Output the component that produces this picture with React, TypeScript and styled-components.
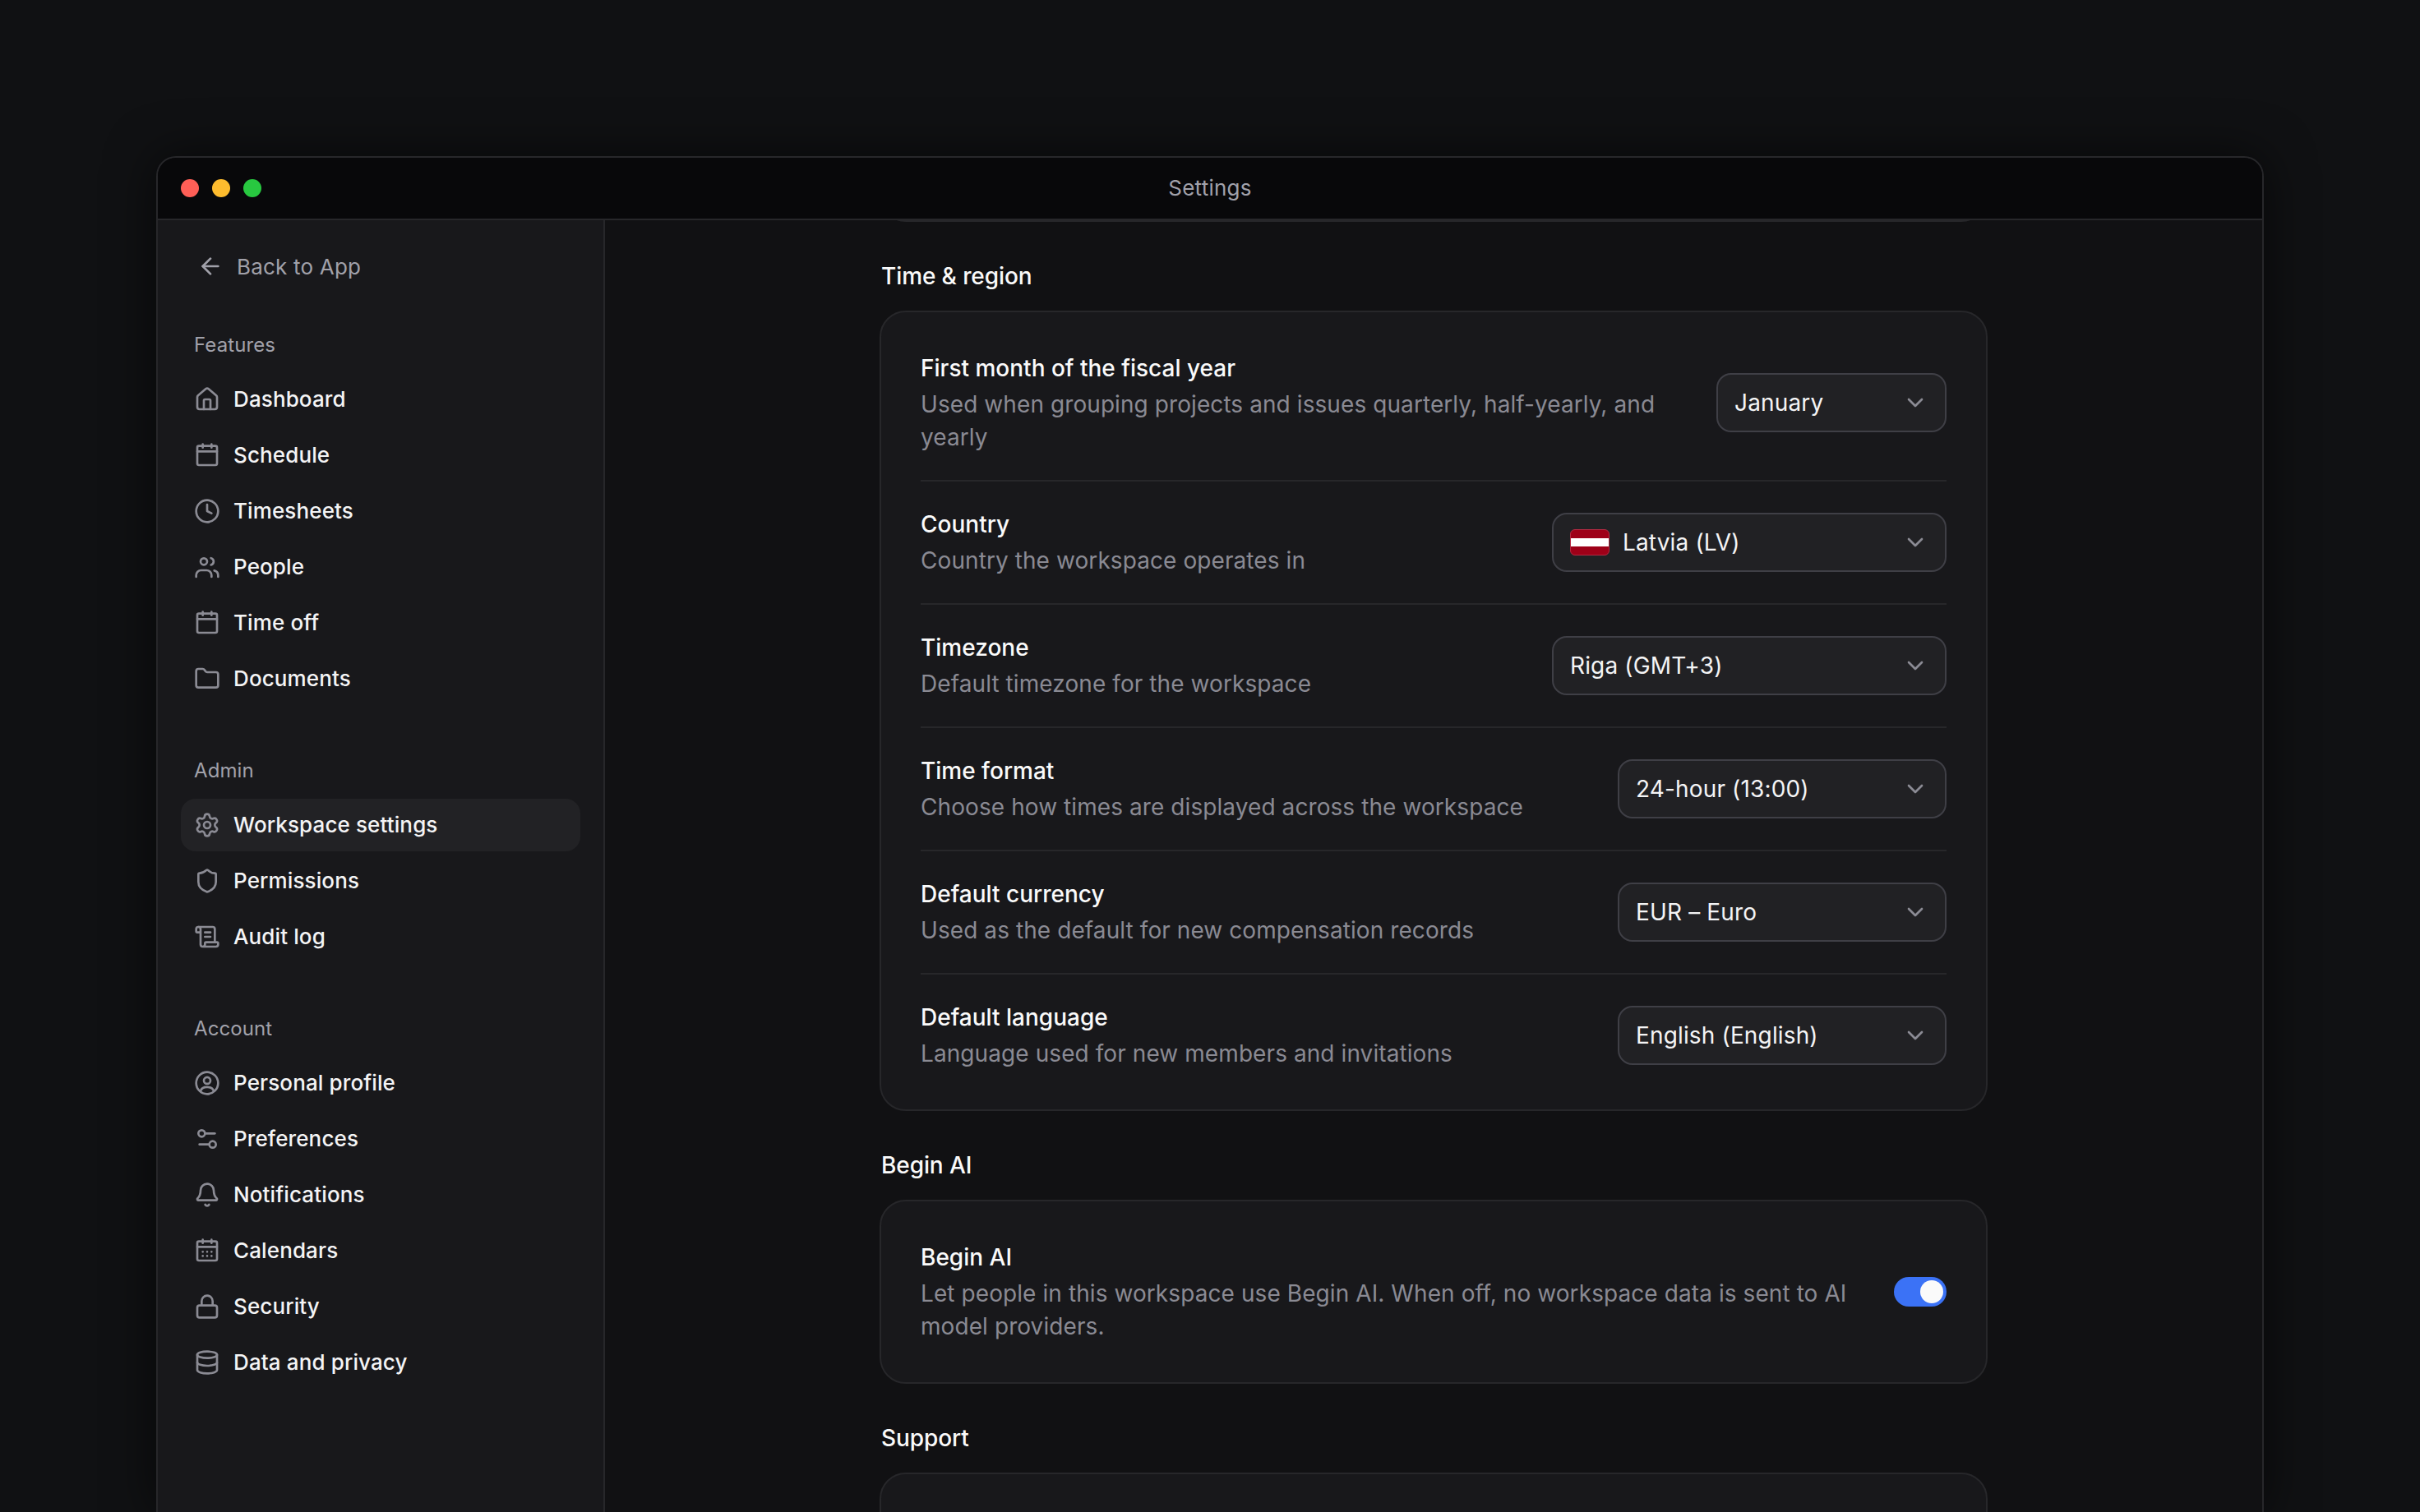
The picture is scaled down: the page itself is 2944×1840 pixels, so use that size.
import styled, { createGlobalStyle } from "styled-components";
import type { ReactNode } from "react";
import {
  ArrowLeft,
  Bell,
  ChevronDown,
  Clock,
  Database,
  Folder,
  House,
  Lock,
  ScrollText,
  Settings,
  Settings2,
  Shield,
} from "lucide-react";

const GlobalStyle = createGlobalStyle`
  html, body {
    margin: 0;
    height: 100%;
    background: #101113;
    font-family: "Inter", "Liberation Sans", sans-serif;
    -webkit-font-smoothing: antialiased;
    overflow: hidden;
  }
  * { box-sizing: border-box; }
`;

const ICON = { size: 32, strokeWidth: 2 };

const Line = ({ children }: { children: ReactNode }) => (
  <svg width="32" height="32" viewBox="0 0 24 24" fill="none" stroke="currentColor" strokeWidth="2" strokeLinecap="round" strokeLinejoin="round">
    {children}
  </svg>
);

const CalendarIcon = () => (
  <Line>
    <rect x="3" y="3.5" width="18" height="17.5" rx="1.5" />
    <path d="M3 8.5h18M8 2v3M16 2v3" />
  </Line>
);

const CalendarDotsIcon = () => (
  <Line>
    <rect x="3" y="3.5" width="18" height="17.5" rx="1.5" />
    <path d="M3 8.5h18M8 2v3M16 2v3" />
    <path d="M8 13h.01M12 13h.01M16 13h.01M8 16.8h.01M12 16.8h.01M16 16.8h.01" />
  </Line>
);

const PeopleIcon = () => (
  <Line>
    <circle cx="9" cy="7" r="3" />
    <path d="M15.5 3.9a3.200 3.200 0 0 1 0 6.200" />
    <path d="M2 21v-1.500A4.500 4.500 0 0 1 6.500 15h5a4.500 4.500 0 0 1 4.500 4.500V21" />
    <path d="M18.500 15.300a4.500 4.500 0 0 1 3.500 4.200V21" />
  </Line>
);

const ProfileIcon = () => (
  <Line>
    <circle cx="12" cy="12" r="10" />
    <circle cx="12" cy="9.700" r="3" />
    <path d="M6 19.300c.6-2.400 3-3.600 6-3.600s5.400 1.200 6 3.600" />
  </Line>
);

const features = [
  { label: "Dashboard", icon: <House {...ICON} /> },
  { label: "Schedule", icon: <CalendarIcon /> },
  { label: "Timesheets", icon: <Clock {...ICON} /> },
  { label: "People", icon: <PeopleIcon /> },
  { label: "Time off", icon: <CalendarIcon /> },
  { label: "Documents", icon: <Folder {...ICON} /> },
];

const admin = [
  { label: "Workspace settings", icon: <Settings {...ICON} />, active: true },
  { label: "Permissions", icon: <Shield {...ICON} /> },
  { label: "Audit log", icon: <ScrollText {...ICON} /> },
];

const account = [
  { label: "Personal profile", icon: <ProfileIcon /> },
  { label: "Preferences", icon: <Settings2 {...ICON} /> },
  { label: "Notifications", icon: <Bell {...ICON} /> },
  { label: "Calendars", icon: <CalendarDotsIcon /> },
  { label: "Security", icon: <Lock {...ICON} /> },
  { label: "Data and privacy", icon: <Database {...ICON} /> },
];

const groups = [
  { title: "Features", items: features },
  { title: "Admin", items: admin },
  { title: "Account", items: account },
];

const settings = [
  {
    title: "First month of the fiscal year",
    desc: "Used when grouping projects and issues quarterly, half-yearly, and yearly",
    value: "January",
    width: 280,
  },
  { title: "Country", desc: "Country the workspace operates in", value: "Latvia (LV)", width: 480, flag: true },
  { title: "Timezone", desc: "Default timezone for the workspace", value: "Riga (GMT+3)", width: 480 },
  { title: "Time format", desc: "Choose how times are displayed across the workspace", value: "24-hour (13:00)", width: 400 },
  { title: "Default currency", desc: "Used as the default for new compensation records", value: "EUR – Euro", width: 400 },
  { title: "Default language", desc: "Language used for new members and invitations", value: "English (English)", width: 400 },
];

const App = () => {
  return (
    <Page>
      <GlobalStyle />
      <Window>
        <TitleBar>
          <Lights>
            <Light color="#ff5f57" />
            <Light color="#febc2e" />
            <Light color="#28c840" />
          </Lights>
          <WindowTitle>Settings</WindowTitle>
        </TitleBar>
        <Body>
          <Sidebar>
            <BackLink>
              <ArrowLeft {...ICON} />
              Back to App
            </BackLink>
            {groups.map((group) => (
              <NavGroup key={group.title}>
                <GroupLabel>{group.title}</GroupLabel>
                <NavList>
                  {group.items.map((item) => (
                    <NavItem key={item.label} $active={"active" in item}>
                      <NavIcon>{item.icon}</NavIcon>
                      <NavLabel>{item.label}</NavLabel>
                    </NavItem>
                  ))}
                </NavList>
              </NavGroup>
            ))}
          </Sidebar>
          <Main>
            <ScrolledCard />
            <Section>
              <SectionTitle>Time &amp; region</SectionTitle>
              <Card>
                {settings.map((row) => (
                  <Row key={row.title}>
                    <RowText>
                      <RowTitle>{row.title}</RowTitle>
                      <RowDesc>{row.desc}</RowDesc>
                    </RowText>
                    <Select $width={row.width}>
                      <SelectValue>
                        {row.flag && (
                          <Flag>
                            <FlagWhite />
                          </Flag>
                        )}
                        {row.value}
                      </SelectValue>
                      <ChevronDown size={32} strokeWidth={2} />
                    </Select>
                  </Row>
                ))}
              </Card>
            </Section>
            <Section>
              <SectionTitle>Begin AI</SectionTitle>
              <Card>
                <Row>
                  <RowText>
                    <RowTitle>Begin AI</RowTitle>
                    <RowDesc>
                      Let people in this workspace use Begin AI. When off, no workspace data is sent to AI model
                      providers.
                    </RowDesc>
                  </RowText>
                  <Toggle>
                    <Knob />
                  </Toggle>
                </Row>
              </Card>
            </Section>
            <Section>
              <SectionTitle>Support</SectionTitle>
              <Card $tall />
            </Section>
          </Main>
        </Body>
      </Window>
    </Page>
  );
};

const Page = styled.div`
  height: 100vh;
  padding: 190px 190px 0;
  display: flex;
  overflow: hidden;
  background: #101113;
`;

const Window = styled.div`
  flex: 1;
  min-width: 0;
  display: flex;
  flex-direction: column;
  background: #111113;
  border: 2px solid #27272a;
  border-bottom: 0;
  border-radius: 24px 24px 0 0;
  box-shadow: 0 0 60px rgba(0, 0, 0, 0.6);
  overflow: hidden;
`;

const TitleBar = styled.div`
  position: relative;
  flex: none;
  height: 76px;
  display: flex;
  align-items: center;
  justify-content: center;
  background: #08080a;
  border-bottom: 2px solid #27272a;
`;

const Lights = styled.div`
  position: absolute;
  left: 28px;
  top: 26px;
  display: flex;
  gap: 16px;
`;

const Light = styled.span<{ color: string }>`
  width: 22px;
  height: 22px;
  border-radius: 50%;
  background: ${({ color }) => color};
`;

const WindowTitle = styled.div`
  font-size: 26px;
  line-height: 36px;
  letter-spacing: 0.25px;
  color: #a1a1aa;
`;

const Body = styled.div`
  flex: 1;
  min-height: 0;
  display: flex;
`;

const Sidebar = styled.aside`
  flex: none;
  width: 544px;
  padding: 24px 28px 0;
  background: #18181b;
  border-right: 2px solid #27272a;
`;

const BackLink = styled.div`
  height: 64px;
  padding-left: 20px;
  display: flex;
  align-items: center;
  gap: 16px;
  font-size: 26px;
  letter-spacing: 0.2px;
  color: #a1a1aa;

  svg {
    color: #a1a1aa;
  }
`;

const NavGroup = styled.div`
  margin-top: 44px;

  & + & {
    margin-top: 60px;
  }
`;

const GroupLabel = styled.div`
  padding-left: 16px;
  font-size: 24px;
  line-height: 40px;
  letter-spacing: 0.1px;
  color: #a1a1aa;
  margin-bottom: 14px;
`;

const NavList = styled.div`
  display: flex;
  flex-direction: column;
  gap: 4px;
`;

const NavItem = styled.div<{ $active?: boolean }>`
  height: 64px;
  padding-left: 16px;
  display: flex;
  align-items: center;
  gap: 16px;
  font-size: 26px;
  font-weight: 450;
  letter-spacing: 0.12px;
  color: #f4f4f5;
  border-radius: 18px;
  background: ${({ $active }) => ($active ? "#222225" : "transparent")};
`;

const NavLabel = styled.span`
  margin-top: -2px;
`;

const NavIcon = styled.span`
  width: 32px;
  height: 32px;
  flex: none;
  display: flex;
  color: #8b8b94;
`;

const Main = styled.main`
  flex: 1;
  min-width: 0;
  padding-left: 334px;
  overflow: hidden;
`;

const Card = styled.div<{ $tall?: boolean }>`
  width: 1348px;
  padding: 16px 48px;
  background: #18181b;
  border: 2px solid #27272a;
  border-radius: 32px;
  min-height: ${({ $tall }) => ($tall ? "200px" : "0")};
`;

const ScrolledCard = styled(Card)`
  height: 102px;
  margin-top: -100px;
`;

const Section = styled.section`
  margin-top: 48px;
`;

const SectionTitle = styled.h2`
  margin: 0 0 24px 2px;
  font-size: 28px;
  line-height: 36px;
  font-weight: 450;
  letter-spacing: -0.1px;
  color: #fafafa;
`;

const Row = styled.div`
  display: flex;
  align-items: center;
  justify-content: space-between;
  gap: 48px;
  padding: 32px 0;

  & + & {
    border-top: 2px solid #27272a;
  }
`;

const RowText = styled.div`
  flex: 1;
  min-width: 0;
`;

const RowTitle = styled.div`
  font-size: 28px;
  line-height: 40px;
  font-weight: 450;
  color: #fafafa;
  margin-bottom: 4px;
`;

const RowDesc = styled.div`
  font-size: 28px;
  line-height: 40px;
  letter-spacing: 0.08px;
  color: #8a8a93;
`;

const Select = styled.div<{ $width: number }>`
  flex: none;
  width: ${({ $width }) => $width}px;
  height: 72px;
  padding: 0 20px;
  display: flex;
  align-items: center;
  justify-content: space-between;
  background: #212124;
  border: 2px solid #3f3f46;
  border-radius: 18px;
  font-size: 28px;
  letter-spacing: 0.15px;
  color: #f4f4f5;

  svg {
    color: #8b8b94;
  }
`;

const SelectValue = styled.div`
  display: flex;
  align-items: center;
  gap: 16px;
`;

const Flag = styled.span`
  width: 48px;
  height: 32px;
  display: flex;
  align-items: center;
  background: #9e0018;
  border: 1px solid #b22a42;
  border-radius: 6px;
  overflow: hidden;
`;

const FlagWhite = styled.span`
  width: 100%;
  height: 10px;
  background: #fff;
`;

const Toggle = styled.div`
  flex: none;
  width: 64px;
  height: 36px;
  padding: 4px;
  display: flex;
  justify-content: flex-end;
  background: #3b72f6;
  border-radius: 18px;
`;

const Knob = styled.span`
  width: 28px;
  height: 28px;
  border-radius: 50%;
  background: #fafafa;
`;

export default App;
